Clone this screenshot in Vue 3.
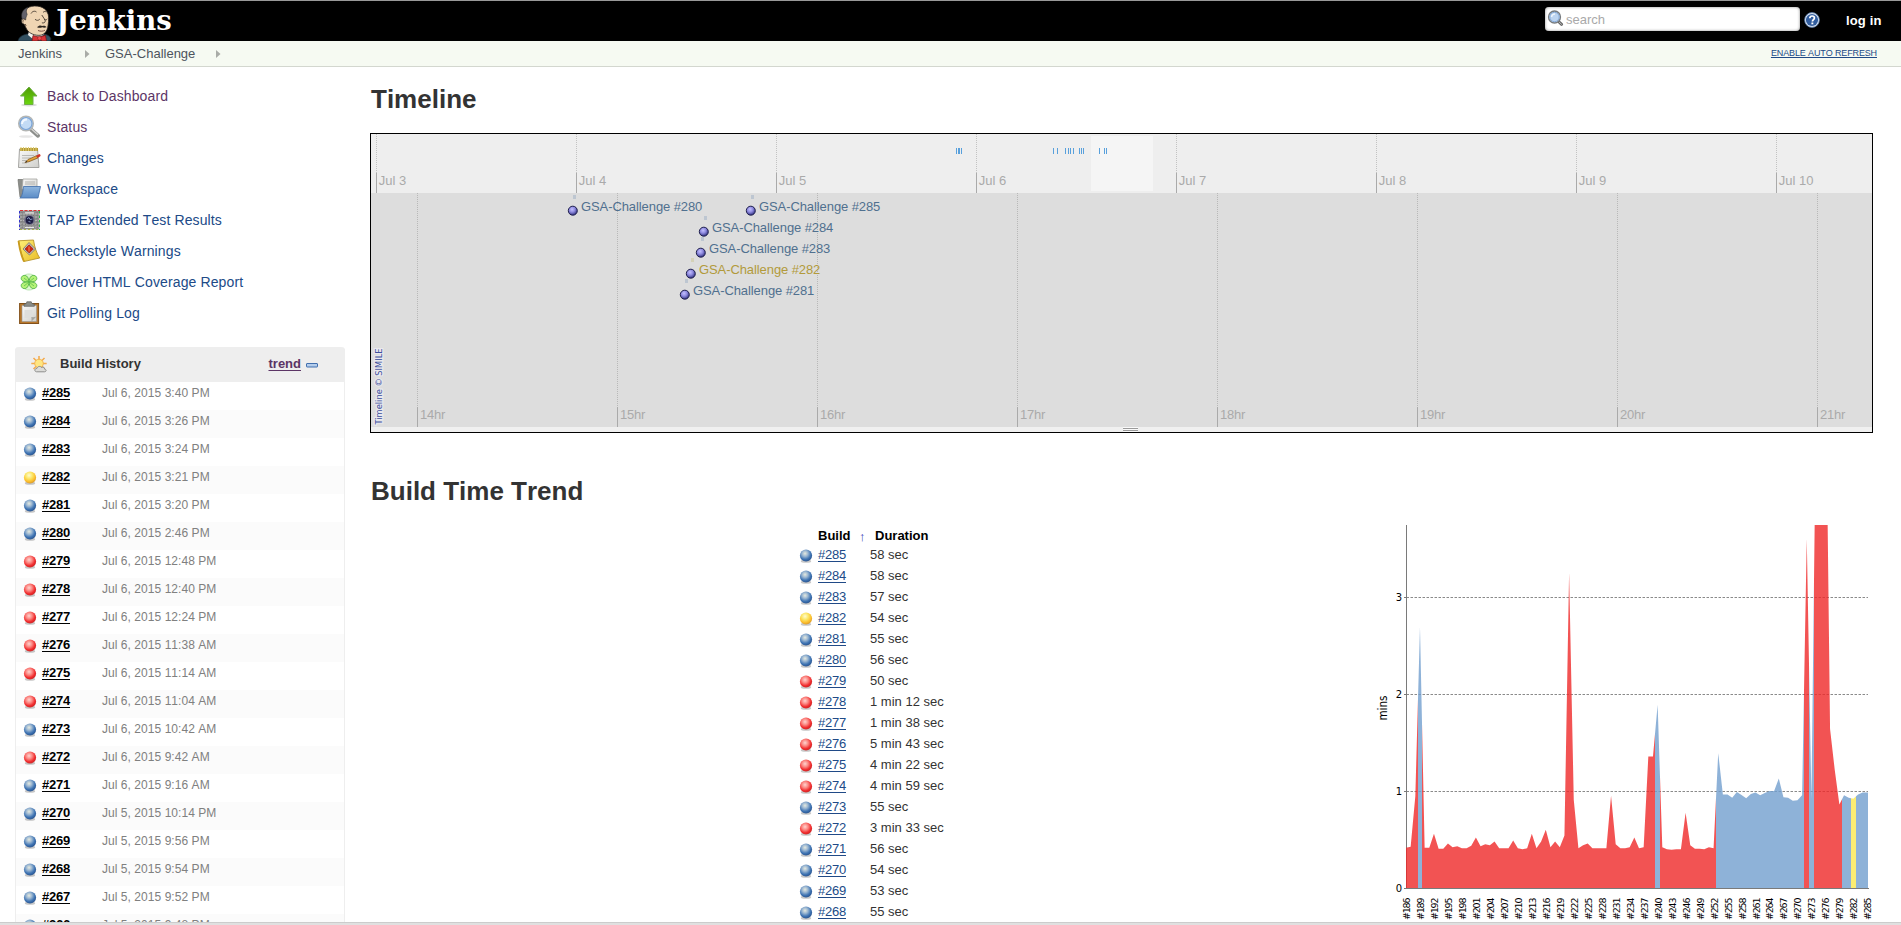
<script setup>
const tasks = [
  { icon: 'up', label: 'Back to Dashboard', visited: true },
  { icon: 'search', label: 'Status', visited: true },
  { icon: 'notepad', label: 'Changes' },
  { icon: 'folder', label: 'Workspace' },
  { icon: 'tap', label: 'TAP Extended Test Results' },
  { icon: 'checkstyle', label: 'Checkstyle Warnings' },
  { icon: 'clover', label: 'Clover HTML Coverage Report' },
  { icon: 'clipboard', label: 'Git Polling Log' },
]

const builds = [
  [285, 'blue', 'Jul 6, 2015 3:40 PM', '58 sec'],
  [284, 'blue', 'Jul 6, 2015 3:26 PM', '58 sec'],
  [283, 'blue', 'Jul 6, 2015 3:24 PM', '57 sec'],
  [282, 'yellow', 'Jul 6, 2015 3:21 PM', '54 sec'],
  [281, 'blue', 'Jul 6, 2015 3:20 PM', '55 sec'],
  [280, 'blue', 'Jul 6, 2015 2:46 PM', '56 sec'],
  [279, 'red', 'Jul 6, 2015 12:48 PM', '50 sec'],
  [278, 'red', 'Jul 6, 2015 12:40 PM', '1 min 12 sec'],
  [277, 'red', 'Jul 6, 2015 12:24 PM', '1 min 38 sec'],
  [276, 'red', 'Jul 6, 2015 11:38 AM', '5 min 43 sec'],
  [275, 'red', 'Jul 6, 2015 11:14 AM', '4 min 22 sec'],
  [274, 'red', 'Jul 6, 2015 11:04 AM', '4 min 59 sec'],
  [273, 'blue', 'Jul 6, 2015 10:42 AM', '55 sec'],
  [272, 'red', 'Jul 6, 2015 9:42 AM', '3 min 33 sec'],
  [271, 'blue', 'Jul 6, 2015 9:16 AM', '56 sec'],
  [270, 'blue', 'Jul 5, 2015 10:14 PM', '54 sec'],
  [269, 'blue', 'Jul 5, 2015 9:56 PM', '53 sec'],
  [268, 'blue', 'Jul 5, 2015 9:54 PM', '55 sec'],
  [267, 'blue', 'Jul 5, 2015 9:52 PM', ''],
  [266, 'blue', 'Jul 5, 2015 9:48 PM', ''],
].map(([id, color, date, duration]) => ({ id, color, date, duration }))
const trendRows = builds.slice(0, 18)

// Timeline bands, in coordinates of the timeline's own canvas
const days = [3, 4, 5, 6, 7, 8, 9, 10].map((d, i) => ({ label: 'Jul ' + d, x: 5.5 + i * 200 }))
const hours = [14, 15, 16, 17, 18, 19, 20, 21].map((h, i) => ({ label: h + 'hr', x: 46.5 + i * 200 }))
const marks = [585, 587, 588, 590, 682, 686, 694, 697, 699, 702, 708, 710, 712, 728, 733, 735]
const events = [
  { id: 280, x: 202, row: 0, color: '#50708f', tape: '#8fa6c0' },
  { id: 285, x: 380, row: 0, color: '#50708f', tape: '#8fa6c0' },
  { id: 284, x: 333, row: 1, color: '#50708f', tape: '#8fa6c0' },
  { id: 283, x: 330, row: 2, color: '#50708f', tape: '#8fa6c0' },
  { id: 282, x: 320, row: 3, color: '#b29a3b', tape: '#c8c080' },
  { id: 281, x: 314, row: 4, color: '#50708f', tape: '#8fa6c0' },
]

// Build durations in minutes, #186 to #285
const mins = [
  0.415, 0.425, 0.945, 2.69, 0.415, 0.415, 0.56, 0.405, 0.405, 0.46, 0.42, 0.43, 0.41, 0.41, 0.435,
  0.52, 0.43, 0.45, 0.44, 0.48, 0.41, 0.41, 0.41, 0.49, 0.41, 0.4, 0.41, 0.56, 0.41, 0.48,
  0.6, 0.42, 0.48, 0.42, 0.54, 3.25, 0.91, 0.41, 0.44, 0.46, 0.41, 0.41, 0.41, 0.41, 0.95,
  0.45, 0.41, 0.41, 0.42, 0.52, 0.41, 0.42, 1.355, 1.355, 1.89, 0.42, 0.4, 0.395, 0.4, 0.4,
  0.775, 0.44, 0.405, 0.405, 0.4, 0.42, 0.41, 1.39, 0.965, 0.965, 0.93, 0.99, 0.96, 0.925, 0.97,
  0.985, 0.955, 0.98, 1.0, 1.0, 1.13, 0.935, 0.93, 0.9, 0.905, 0.955, 3.6, 0.925, 4.98, 4.37,
  5.72, 1.64, 1.22, 0.86, 0.955, 0.93, 0.92, 0.965, 0.985, 0.985,
]
const X0 = 1406
const Y0 = 888
const xAt = (i) => X0 + i * 4.66
const yAt = (v) => Y0 - v * 97
const areaPoints =
  `${X0},${Y0} ` + mins.map((v, i) => `${xAt(i).toFixed(2)},${yAt(v).toFixed(2)}`).join(' ') +
  ` 1868,${yAt(0.985)} 1868,${Y0}`
const bands = [
  { from: 186, to: 188, c: '#ef2929' },
  { from: 189, to: 189, c: '#729fcf' },
  { from: 190, to: 239, c: '#ef2929' },
  { from: 240, to: 240, c: '#729fcf' },
  { from: 241, to: 252, c: '#ef2929' },
  { from: 253, to: 271, c: '#729fcf' },
  { from: 272, to: 272, c: '#ef2929' },
  { from: 273, to: 273, c: '#729fcf' },
  { from: 274, to: 279, c: '#ef2929' },
  { from: 280, to: 281, c: '#729fcf' },
  { from: 282, to: 282, c: '#fce94f' },
  { from: 283, to: 285, c: '#729fcf' },
].map((b) => {
  const x = b.from === 186 ? X0 : Math.round(xAt(b.from - 186 - 0.5))
  const end = b.to === 285 ? 1868 : Math.round(xAt(b.to - 186 + 0.5))
  return { x, w: end - x, c: b.c }
})
const xLabels = Array.from({ length: 34 }, (_, i) => ({ id: 186 + i * 3, x: xAt(i * 3) + 4 }))
</script>

<template>
  <div class="page">
    <svg class="defs" width="0" height="0" aria-hidden="true">
      <defs>
        <radialGradient id="g-blue" cx="42%" cy="34%" r="66%">
          <stop offset="0" stop-color="#e6eadf" /><stop offset=".35" stop-color="#9db8d2" />
          <stop offset=".72" stop-color="#3f74b3" /><stop offset="1" stop-color="#2b5590" />
        </radialGradient>
        <radialGradient id="g-red" cx="42%" cy="36%" r="66%">
          <stop offset="0" stop-color="#ffd3cf" /><stop offset=".4" stop-color="#fb8580" />
          <stop offset=".75" stop-color="#f02a2c" /><stop offset="1" stop-color="#c62a2a" />
        </radialGradient>
        <radialGradient id="g-yellow" cx="42%" cy="32%" r="68%">
          <stop offset="0" stop-color="#fffbd0" /><stop offset=".4" stop-color="#fbe769" />
          <stop offset=".75" stop-color="#fcbf2e" /><stop offset="1" stop-color="#d99a2c" />
        </radialGradient>
        <radialGradient id="g-event" cx="42%" cy="35%" r="62%">
          <stop offset="0" stop-color="#c4c0ff" /><stop offset=".5" stop-color="#8f8be0" />
          <stop offset="1" stop-color="#3a3a88" />
        </radialGradient>
        <linearGradient id="g-up" x1="0" y1="0" x2="0" y2="1">
          <stop offset="0" stop-color="#4e9a06" /><stop offset="1" stop-color="#6bd60f" />
        </linearGradient>
        <linearGradient id="g-folder" x1="0" y1="0" x2="0" y2="1">
          <stop offset="0" stop-color="#8fb6df" /><stop offset="1" stop-color="#5b8cc6" />
        </linearGradient>
        <linearGradient id="g-gray" x1="0" y1="0" x2="1" y2="1">
          <stop offset="0" stop-color="#fafafa" /><stop offset="1" stop-color="#cfcfcb" />
        </linearGradient>
        <linearGradient id="g-note" x1="0" y1="0" x2="1" y2="1">
          <stop offset="0" stop-color="#fff078" /><stop offset="1" stop-color="#e8bc26" />
        </linearGradient>
      </defs>
    </svg>

    <header class="top">
      <svg class="logo" width="166" height="40" viewBox="10 1 166 40" role="img" aria-label="Jenkins logo">
        <path d="M18 41c1-4 4-6 9-7l15 0c5 0 8 2 9 5l-1 2z" fill="#335061" stroke="#182a33" stroke-width=".7" />
        <path d="M29 31l-1 4 6 5h4l6-6-1-3z" fill="#f7f3ee" />
        <path d="M24 24c-2.800.2-3.400-5-1-6C22 11.500 26.500 6.300 34.500 6c8-.3 13.700 4 14.100 11 .3 3-.2 6-.6 8.800-.5 5-3.500 9-8 9.500-5 .4-10.500-1.700-13-5.500-1-1.700-2.200-4.300-3-5.800z" fill="#efd5b3" stroke="#231f1c" stroke-width=".8" />
        <path d="M22.300 19.500c-2-5.500.2-10.500 5.900-12.500-1.500 2-2.200 3.800-1.600 5.600l.6 2c-1 1.800-1.400 3.600-1.500 5.400-.9-1.600-2.200-1.600-3.400-.5z" fill="#62616a" stroke="#242424" stroke-width=".5" />
        <path d="M23.200 22.300c-1-2 1-3.500 2.200-2.300M25.300 24l.8 2" fill="none" stroke="#4c382b" stroke-width=".8" />
        <path d="M31 13.500c1.500-2.500 4-2.800 5.500-1.500M43 12.500c1-1.300 2.500-1.300 3.300-.3M35 19.300c1.600 1.400 3.600 1.400 4.800-.2M44.300 19.300c1 .9 2.200.7 3-.3M41.800 15c1.800 3 3.800 5 3.300 6.800-.5 1.200-2 1.300-3.200 1" fill="none" stroke="#302720" stroke-width=".8" />
        <path d="M37 27.300c2-2.200 4-2 5.200-1.200 1.600-.7 3.600-.3 4.300 1.200-1.700.5-3 .5-4.300 0-1.600.8-3.500.7-5.200 0z" fill="#2d2721" />
        <path d="M38 30.500c2.500 1 5 1 7-.3" fill="none" stroke="#73433a" stroke-width=".9" />
        <path d="M33 35.500l6 1.600 6.500-1.800 1 5.700h-4l-2.500-1.300L37 41h-5z" fill="#d93236" stroke="#6c1113" stroke-width=".7" />
        <circle cx="39.500" cy="38.300" r="1.900" fill="#f04c4c" stroke="#7c1518" stroke-width=".5" />
        <text x="56.300" y="30" class="wordmark" textLength="115.500" lengthAdjust="spacingAndGlyphs">Jenkins</text>
      </svg>
      <div class="searchbox">
        <svg width="17" height="17" viewBox="0 0 17 17">
          <path d="M11 11l3.600 3.300" stroke="#666" stroke-width="3" stroke-linecap="round" />
          <path d="M11.500 11.500l3 2.800" stroke="#bbb" stroke-width="1" stroke-linecap="round" />
          <circle cx="7.500" cy="7" r="6" fill="#bcd4f0" stroke="#777b7e" stroke-width="1.300" />
          <circle cx="7.500" cy="7" r="4.700" fill="none" stroke="#7fa5d4" stroke-width=".9" />
          <path d="M4.500 7c.3-2 1.700-3 3.500-3" stroke="#edf5fc" stroke-width="1.500" fill="none" />
        </svg>
        <span>search</span>
      </div>
      <svg class="help" width="16" height="16" viewBox="0 0 16 16">
        <circle cx="8" cy="8" r="7.400" fill="#dfe7f2" stroke="#5679a8" stroke-width=".8" />
        <circle cx="8" cy="8" r="6.100" fill="#315d9f" />
        <path d="M5.800 6.200C5.900 4.700 6.800 4 8.100 4c1.400 0 2.300.8 2.300 1.900 0 1.600-2 1.700-2 3.500" fill="none" stroke="#fff" stroke-width="1.700" />
        <rect x="7.400" y="10.500" width="1.900" height="1.800" fill="#fff" />
      </svg>
      <a class="login">log in</a>
    </header>

    <nav class="crumbs">
      <a class="crumb-root">Jenkins</a>
      <svg class="arrow first" width="5" height="8"><path d="M0 0l4.500 4L0 8z" fill="#a9aca7" /></svg>
      <a class="crumb-job">GSA-Challenge</a>
      <svg class="arrow" width="5" height="8"><path d="M0 0l4.500 4L0 8z" fill="#a9aca7" /></svg>
      <a class="refresh">ENABLE AUTO REFRESH</a>
    </nav>

    <div class="body">
      <aside class="side">
        <a v-for="t in tasks" :key="t.icon" class="task" :class="{ visited: t.visited }">
          <svg width="24" height="24" viewBox="0 0 24 24">
            <template v-if="t.icon === 'up'">
              <ellipse cx="12" cy="21" rx="8" ry="1.500" fill="#ddd" />
              <path d="M12 3l8 9h-4v8.500H7.500V12h-4z" fill="url(#g-up)" stroke="#6fae45" stroke-width="1" />
            </template>
            <template v-else-if="t.icon === 'search'">
              <ellipse cx="9" cy="21.500" rx="7" ry="1.300" fill="#e6e6e6" />
              <path d="M14 14.500l7 6.200" stroke="#8d8f8c" stroke-width="4" stroke-linecap="round" />
              <path d="M14.500 14l6.500 5.700" stroke="#d6d6d4" stroke-width="1.300" />
              <circle cx="9" cy="8.500" r="7.300" fill="#c3dbf5" stroke="#b4b6b4" stroke-width="1.500" />
              <circle cx="9" cy="8.500" r="6" fill="none" stroke="#7ba4d6" stroke-width="1.200" />
              <path d="M5 9c.2-3 2-4.500 5-4.500" stroke="#f2f8ff" stroke-width="2" fill="none" />
            </template>
            <template v-else-if="t.icon === 'notepad'">
              <path d="M2.500 3h18l1.500 18.500H1.500z" fill="url(#g-gray)" stroke="#9a9a96" stroke-width=".9" />
              <path d="M3 2h18v3H3z" fill="#b39a35" />
              <path d="M4 1v4M6.500 1v4M9 1v4M11.500 1v4M14 1v4M16.500 1v4M19 1v4" stroke="#e0cc70" stroke-width="1" />
              <path d="M5 9.500h12M5 12h9M5 14.500h6M5 17h5" stroke="#b9b9b6" />
              <path d="M8 16.500l3-3 8.500-3.800 1.500 2.200-9 3.800z" fill="#e3a43a" stroke="#77501c" stroke-width=".7" />
              <path d="M19 9.800l3.300-1.800c1.500.3 1.600 2 .7 2.500l-2.500 1.400z" fill="#cf3527" />
              <path d="M8 16.500l1.500-1.500.8.900z" fill="#222" />
            </template>
            <template v-else-if="t.icon === 'folder'">
              <path d="M1 2.500h5l1 1h12.500V20H3z" fill="#8d8f8b" stroke="#6e706c" stroke-width=".7" />
              <path d="M6 2h14v10H5z" fill="url(#g-gray)" stroke="#a3a3a0" stroke-width=".8" />
              <path d="M8 5h10M8 7h10" stroke="#b3b3b0" />
              <path d="M6.500 9.500h17l-2.500 11.500H2.800c2-1 3-5 3.700-11.500z" fill="url(#g-folder)" stroke="#3f6dab" stroke-width=".8" />
            </template>
            <template v-else-if="t.icon === 'tap'">
              <rect x="2.500" y="2.500" width="20" height="19" fill="#8e8e8e" />
              <path d="M3 6h19M3 9h19M3 12.500h19M3 16h19M3 19h19" stroke="#b9b9b9" stroke-width=".9" stroke-dasharray="2 1" />
              <path d="M5 4v17M8.500 4v17M16.500 4v17M20 4v17" stroke="#6e6e6e" stroke-width=".7" stroke-dasharray="1 2" />
              <ellipse cx="12.500" cy="12" rx="5.500" ry="5" fill="#77758a" />
              <circle cx="12.500" cy="12" r="3.900" fill="#1e1d43" />
              <path d="M10 11l2-1.500 1 2 2.500-.5M11.500 13.500l2 .5" stroke="#9bb5de" stroke-width=".8" fill="none" />
              <path d="M8 19.500h9M8 4.800h9" stroke="#e6e6e6" stroke-width="1.200" />
              <path d="M3 2.500h20" stroke="#d33" stroke-dasharray="3 1.500" />
              <path d="M2.500 3v19" stroke="#33c" stroke-dasharray="2.500 2" />
              <path d="M22.500 3v19" stroke="#2b4" stroke-dasharray="2.500 2" />
              <path d="M3 21.500h20" stroke="#a8b050" stroke-dasharray="2 2" />
            </template>
            <template v-else-if="t.icon === 'checkstyle'">
              <path d="M1.500 1.800L16.500 1c1 7 3 13 6.200 18L7 22.500C4.500 16 3 9 1.500 1.800z" fill="url(#g-note)" stroke="#b8942a" stroke-width=".9" />
              <path d="M1.500 2c1 8 2.500 14 5.500 20.500" stroke="#c99a1c" stroke-width="1.800" fill="none" />
              <path d="M12 3.500l6.500 6.500-6 6-6.500-6z" fill="#c9c4bc" stroke="#75706a" stroke-width=".8" />
              <path d="M12 5.800l4.300 4.200-4 4-4.300-4z" fill="#d1240e" stroke="#84170c" stroke-width=".6" />
              <path d="M12 7.500v5" stroke="#ff8a55" stroke-width="1" />
            </template>
            <template v-else-if="t.icon === 'clover'">
              <path d="M7.500 6C8 3.300 16 3.300 16.500 6L12 12zM7.500 18c.5 2.700 8.500 2.700 9 0L12 12z" fill="#dff8cf" stroke="#a5dca0" stroke-width=".7" />
              <g fill="#b5f277" stroke="#4cb043" stroke-width=".9">
                <path d="M12 12C8.500 12.200 4.300 11.500 4.200 8.500 4.200 5.800 7.500 4.500 9.500 6 11.300 7.500 11.800 9.500 12 12z" />
                <path d="M12 12c.2-2.500.7-4.500 2.500-6 2-1.500 5.300-.2 5.300 2.500C19.700 11.500 15.500 12.200 12 12z" />
                <path d="M12 12c3.500-.2 7.700.5 7.800 3.500 0 2.700-3.300 4-5.300 2.500-1.800-1.500-2.300-3.500-2.500-6z" />
                <path d="M12 12c-.2 2.500-.7 4.500-2.500 6-2 1.500-5.300.2-5.300-2.500.1-3 4.300-3.700 7.800-3.500z" />
              </g>
              <path d="M7 8l10 8M17 8L7 16" fill="none" stroke="#5cc04c" stroke-width=".8" />
            </template>
            <template v-else>
              <rect x="2.600" y="2.500" width="19" height="20" fill="#b9782c" stroke="#83511b" stroke-width="1" />
              <path d="M5 4.500h14.500v16H5z" fill="url(#g-gray)" stroke="#999" stroke-width=".6" />
              <path d="M7.500 9h8v8h-8z" fill="#dededc" />
              <path d="M19.500 15.500l-5 5c0-2 .2-3.500-.3-4.500 2 .3 3.500.1 5.300-.5z" fill="#a6a6a2" />
              <path d="M7 5.300V3c2 0 2.500-.3 2.800-2.200h4.500c.3 2 1 2.200 3 2.200v2.300z" fill="#8b8d89" stroke="#5d5f5b" stroke-width=".7" />
            </template>
          </svg>
          <span>{{ t.label }}</span>
        </a>

        <section class="history">
          <div class="history-head">
            <svg width="17" height="17" viewBox="0 0 17 17">
              <path d="M8 0v15M.3 7.500h15.400M2.500 2l11 11M13.500 2l-11 11" stroke="#f3a94a" stroke-width="1.500" />
              <circle cx="8" cy="7.500" r="4.300" fill="#ffe681" stroke="#f2b04a" stroke-width=".9" />
              <path d="M5.500 15.800c-2.500-.3-2-3.500.3-3.300.6-2.500 4-2.600 4.700-1 2-1.200 3.300.3 3 1.600 2.300.1 2 2.700 0 2.700z" fill="#dcdcd9" stroke="#858582" stroke-width=".9" />
            </svg>
            <b>Build History</b>
            <a>trend</a>
            <svg class="minus" width="12" height="5"><rect x=".5" y=".5" width="11" height="3.500" rx=".5" fill="#b4cdec" stroke="#416fae" /></svg>
          </div>
          <div v-for="b in builds" :key="b.id" class="history-row">
            <svg width="16" height="16" viewBox="0 0 16 16">
              <ellipse cx="8" cy="13.200" rx="5.200" ry="1.600" fill="#000" opacity=".22" />
              <circle cx="8" cy="7.500" r="6.100" :fill="`url(#g-${b.color})`" />
            </svg>
            <a>#{{ b.id }}</a>
            <span>{{ b.date }}</span>
          </div>
        </section>
      </aside>

      <main class="main">
        <h1>Timeline</h1>
        <div class="timeline">
          <svg width="1501" height="298" viewBox="0 0 1501 298">
            <rect width="1501" height="59" fill="#eee" />
            <rect y="59" width="1501" height="234" fill="#ddd" />
            <rect y="293" width="1501" height="5" fill="#f0f0f0" />
            <rect x="720" y="2" width="62" height="55" fill="#f5f5f5" />
            <g v-for="d in days" :key="d.label">
              <path :d="`M${d.x} 0V39`" stroke="#c2c2c2" stroke-dasharray="1 1" />
              <path :d="`M${d.x} 39V59`" stroke="#aaa" />
              <text :x="d.x + 2.200" y="51" class="tick">{{ d.label }}</text>
            </g>
            <g v-for="h in hours" :key="h.label">
              <path :d="`M${h.x} 59V273`" stroke="#b8b8b8" stroke-dasharray="1 1" />
              <path :d="`M${h.x} 273V293`" stroke="#aaa" />
              <text :x="h.x + 2.500" y="285" class="tick hour">{{ h.label }}</text>
            </g>
            <rect v-for="m in marks" :key="m" :x="m" y="14" width="1" height="6" fill="#58a0dc" />
            <g v-for="e in events" :key="e.id">
              <rect :x="e.x" :y="61 + e.row * 21" width="3" height="4" :fill="e.tape" opacity=".4" />
              <circle :cx="e.x - 0.2" :cy="76.700 + e.row * 21" r="4.500" fill="url(#g-event)" stroke="#20204e" stroke-width="1" />
              <text :x="e.x + 8" :y="76.500 + e.row * 21" class="event" :fill="e.color">GSA-Challenge #{{ e.id }}</text>
            </g>
            <text class="simile" transform="translate(10.500 290.500) rotate(-90)" textLength="76" lengthAdjust="spacingAndGlyphs">Timeline © SIMILE</text>
            <rect x="752" y="293" width="15" height="5" fill="#fafafa" />
            <path d="M752 294.500h15M752 296.500h15" stroke="#9a9a9a" />
          </svg>
        </div>

        <h1 class="second">Build Time Trend</h1>
        <div class="trend">
          <div class="durations">
            <div class="dur-head"><b class="c-build">Build</b><span class="sort">↑</span><b>Duration</b></div>
            <div v-for="b in trendRows" :key="b.id" class="dur-row">
              <svg width="16" height="16" viewBox="0 0 16 16">
                <ellipse cx="8" cy="13.200" rx="5.200" ry="1.600" fill="#000" opacity=".22" />
                <circle cx="8" cy="7.500" r="6.100" :fill="`url(#g-${b.color})`" />
              </svg>
              <a>#{{ b.id }}</a>
              <span>{{ b.duration }}</span>
            </div>
          </div>
          <svg class="chart" width="500" height="397" viewBox="1373 525 500 397">
            <defs>
              <clipPath id="area"><polygon :points="areaPoints" /></clipPath>
            </defs>
            <path d="M1406.500 597.500H1868M1406.500 694.500H1868M1406.500 791.500H1868" stroke="#8a8a8a" stroke-dasharray="2.500 1.500" />
            <path d="M1406.500 525V888.500M1404 597.500h2M1404 694.500h2M1404 791.500h2M1404 888.500h2" stroke="#7a7a7a" />
            <g clip-path="url(#area)" opacity=".8">
              <rect v-for="b in bands" :key="b.x" :x="b.x" y="525" :width="b.w" height="363" :fill="b.c" />
            </g>
            <path d="M1405 888.500H1869" stroke="#7a7a7a" />
            <text x="1402" y="601" class="axis">3</text>
            <text x="1402" y="698" class="axis">2</text>
            <text x="1402" y="794.500" class="axis">1</text>
            <text x="1402" y="891.500" class="axis">0</text>
            <text class="unit" transform="translate(1387 720.500) rotate(-90)" textLength="25" lengthAdjust="spacingAndGlyphs">mins</text>
            <text
              v-for="l in xLabels"
              :key="l.id"
              class="xlabel"
              textLength="22.500"
              :transform="`translate(${l.x} 920) rotate(-90)`"
            >#{{ l.id }}</text>
          </svg>
        </div>
      </main>
    </div>
    <div class="bottom"></div>
  </div>
</template>

<style>
body { margin: 0; background: #fff; overflow: hidden; }
</style>

<style scoped>
.page {
  display: flex;
  flex-direction: column;
  width: 1901px;
  height: 925px;
  overflow: hidden;
  font-family: "Liberation Sans", Arial, sans-serif;
  font-size: 13px;
  font-kerning: none;
  color: #333;
}
.defs { position: absolute; }
svg { display: block; flex: none; }
.top {
  flex: none;
  box-sizing: border-box;
  height: 41px;
  display: flex;
  align-items: flex-start;
  background: #000;
  border-top: 1px solid #999;
  padding-left: 10px;
}
.wordmark { font: bold 28px "DejaVu Serif", serif; fill: #fff; }
.searchbox {
  box-sizing: border-box;
  display: flex;
  align-items: center;
  gap: 2px;
  width: 255px;
  height: 24px;
  margin: 6px 0 0 auto;
  padding-left: 2px;
  border-radius: 4px;
  background: #fff;
  box-shadow: inset 0 0 3px #888;
  color: #a9a9a9;
}
.searchbox svg { margin-top: -1px; }
.help { margin: 11px 0 0 4px; }
.login {
  width: 55px;
  margin: 11px 0 0 26px;
  font-weight: bold;
  line-height: 17px;
  letter-spacing: 0.15px;
  color: #fff;
}
.crumbs {
  flex: none;
  box-sizing: border-box;
  height: 26px;
  display: flex;
  align-items: center;
  padding: 0 24px 1px 18px;
  background: #f6faf2;
  border-bottom: 1px solid #d3d7cf;
  color: #4d545d;
}
.crumb-root { width: 67px; }
.crumb-job { width: 111px; margin-left: 15px; }
.arrow { margin-top: 1px; }
.refresh {
  margin-left: auto;
  font-size: 9px;
  letter-spacing: -0.13px;
  text-decoration: underline;
  color: #204a87;
}
.body { flex: 1; min-height: 0; display: flex; overflow: hidden; }
.side { flex: none; width: 330px; padding: 13px 0 0 15px; }
.task {
  display: flex;
  align-items: center;
  gap: 6px;
  height: 31px;
  padding-left: 2px;
  font-size: 14px;
  letter-spacing: 0.12px;
  color: #204a87;
}
.task.visited { color: #5c3566; }
.history {
  box-sizing: border-box;
  margin-top: 19px;
  border: solid #eee;
  border-width: 0 1px;
  border-radius: 4px 4px 0 0;
}
.history-head {
  display: flex;
  align-items: center;
  box-sizing: border-box;
  height: 35px;
  margin: 0 -1px;
  padding: 0 27px 0 16px;
  border-radius: 4px 4px 0 0;
  background: #eee;
}
.history-head b { margin: -3px auto 0 12px; }
.history-head a {
  margin-top: -3px;
  font-weight: bold;
  text-decoration: underline;
  text-underline-offset: 2px;
  color: #5c3566;
}
.minus { margin: 1px 0 0 5px; }
.history-row {
  display: flex;
  height: 28px;
  padding-left: 6px;
}
.history-row:nth-child(odd) { background: #fbfbfb; }
.history-row svg { margin-top: 4px; }
.history-row a {
  width: 60px;
  margin-left: 4px;
  font-weight: bold;
  letter-spacing: -0.23px;
  line-height: 22px;
  text-decoration: underline;
  text-underline-offset: 2px;
  color: #000;
}
.history-row span { font-size: 12px; line-height: 22px; letter-spacing: 0.05px; color: #808080; }
.main { flex: none; width: 1503px; margin-left: 25px; }
h1 { margin: 17px 0 19px; padding-left: 1px; font-size: 26px; line-height: 30px; color: #333; }
h1.second { margin: 43px 0 19px; }
.timeline { border: 1px solid #000; }
.tick { font-size: 13px; fill: #aaa; }
.hour { letter-spacing: -0.2px; }
.event { font-size: 13px; letter-spacing: -0.09px; }
.simile {
  font: 9px "DejaVu Sans", sans-serif;
  fill: #3d4f9c;
  stroke: #e9e9ee;
  stroke-width: 2.500px;
  paint-order: stroke;
}
.trend { display: flex; align-items: flex-start; }
.durations { width: 200px; margin-left: 428px; }
.dur-head { display: flex; height: 19px; line-height: 21px; padding-left: 20px; color: #000; }
.c-build { width: 41px; }
.sort { width: 16px; font-size: 13px; line-height: 23px; color: #4343b5; }
.dur-row { display: flex; height: 21px; line-height: 21px; }
.dur-row svg { margin-top: 4px; }
.dur-row a {
  width: 52px;
  margin-left: 4px;
  letter-spacing: -0.23px;
  text-decoration: underline;
  text-underline-offset: 2px;
  color: #204a87;
}
.chart { margin-left: auto; }
.axis { font: 10px "DejaVu Sans", sans-serif; fill: #000; text-anchor: end; }
.unit { font: 12px "DejaVu Sans", sans-serif; fill: #000; }
.xlabel { font: 9.500px "DejaVu Sans", sans-serif; fill: #000; }
.bottom { flex: none; height: 2px; border-top: 1px solid #ccc; background: #e0e0e0; }
</style>
